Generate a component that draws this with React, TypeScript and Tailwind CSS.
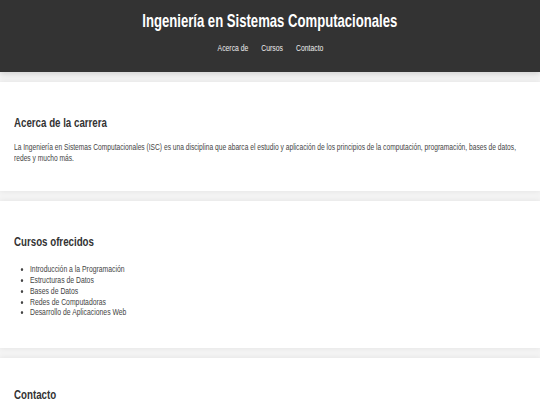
const courses = [
  "Introducción a la Programación",
  "Estructuras de Datos",
  "Bases de Datos",
  "Redes de Computadoras",
  "Desarrollo de Aplicaciones Web",
];

// The reference uses a condensed face; no condensed font is installed,
// so text blocks are squeezed horizontally with scale-x.
function Section({
  title,
  children,
  className = "",
}: {
  title: string;
  children?: React.ReactNode;
  className?: string;
}) {
  return (
    <section
      className={`mt-[10px] overflow-hidden bg-white px-[14px] shadow-[0_0_6px_rgba(0,0,0,0.08)] ${className}`}
    >
      <h2 className="origin-left scale-x-[0.81] text-[12px] leading-[15px] font-bold text-[#333]">
        {title}
      </h2>
      {children}
    </section>
  );
}

export default function App() {
  return (
    <div className="min-h-screen overflow-hidden bg-[#f4f4f4] font-['Liberation_Sans',Arial,sans-serif] text-[#333]">
      <header className="flex h-[72px] flex-col items-center bg-[#333] pt-[10px] text-white shadow-[0_2px_6px_rgba(0,0,0,0.15)]">
        <h1 className="origin-center scale-x-[0.69] text-[19px] leading-[22px] font-bold whitespace-nowrap">
          Ingeniería en Sistemas Computacionales
        </h1>
        <nav className="mt-[10px] flex origin-center scale-x-[0.72] gap-[18px] text-[9.5px] leading-[11px] text-[#eee]">
          <a href="#acerca">Acerca de</a>
          <a href="#cursos">Cursos</a>
          <a href="#contacto">Contacto</a>
        </nav>
      </header>

      <main>
        <Section title="Acerca de la carrera" className="pt-[34px] pb-[28px]">
          <p className="mt-[11px] w-[692px] origin-left scale-x-[0.74] text-[9px] leading-[10.7px] text-[#444]">
            La Ingeniería en Sistemas Computacionales (ISC) es una disciplina
            que abarca el estudio y aplicación de los principios de la
            computación, programación, bases de datos, redes y mucho más.
          </p>
        </Section>

        <Section title="Cursos ofrecidos" className="pt-[34px] pb-[30px]">
          <ul className="mt-[14px] origin-left scale-x-[0.76] list-disc pl-[21px] text-[9px] leading-[10.7px] text-[#444]">
            {courses.map((course) => (
              <li key={course}>{course}</li>
            ))}
          </ul>
        </Section>

        <Section title="Contacto" className="pt-[30px] pb-[30px]" />
      </main>
    </div>
  );
}
